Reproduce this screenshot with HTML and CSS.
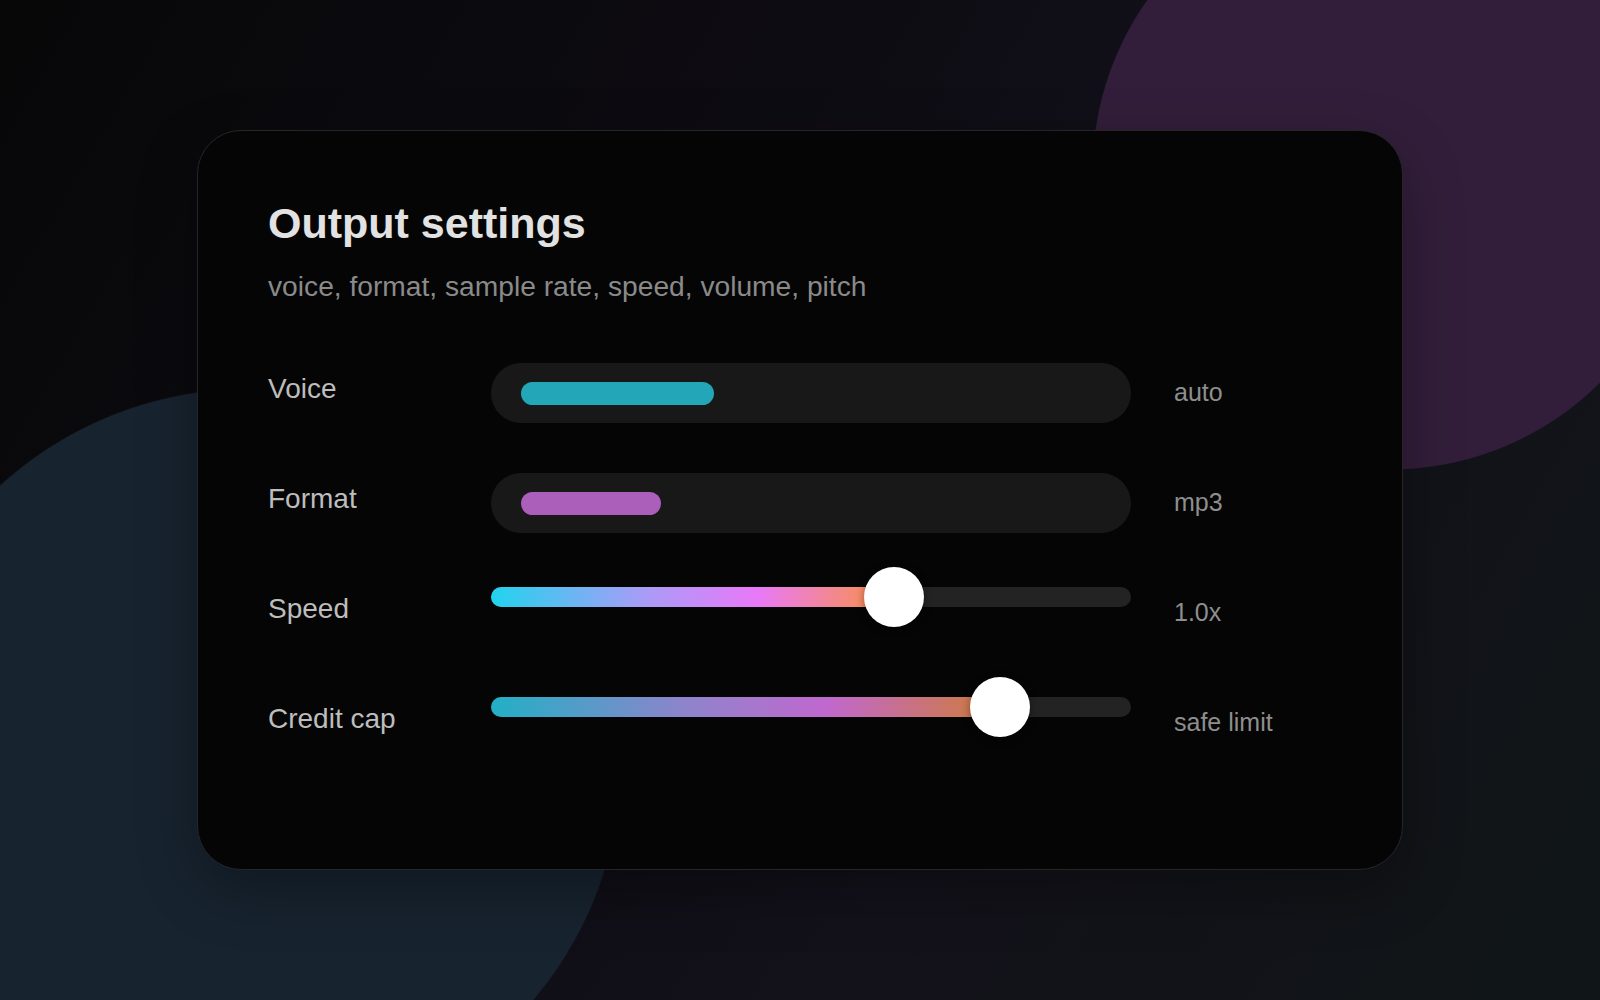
FILE: index.html
```html
<!DOCTYPE html>
<html lang="en">
<head>
    <meta charset="UTF-8">
    <meta name="viewport" content="width=device-width, initial-scale=1.0">
    <title>Output settings</title>
    <link rel="stylesheet" href="styles.css">
</head>
<body>
    <div class="settings-card">
        <h1 class="card-title">Output settings</h1>
        <p class="card-subtitle">voice, format, sample rate, speed, volume, pitch</p>

        <div class="settings-grid">
            <!-- Voice -->
            <div class="setting-label">Voice</div>
            <div class="pill-track">
                <div class="pill-bar pill-voice" style="width: 193px;"></div>
            </div>
            <div class="setting-value">auto</div>

            <!-- Format -->
            <div class="setting-label">Format</div>
            <div class="pill-track">
                <div class="pill-bar pill-format" style="width: 140px;"></div>
            </div>
            <div class="setting-value">mp3</div>

            <!-- Speed -->
            <div class="setting-label">Speed</div>
            <div class="slider">
                <div class="slider-track">
                    <div class="slider-fill fill-speed" style="width: 63%;"></div>
                    <span class="slider-thumb" style="left: 63%;"></span>
                </div>
            </div>
            <div class="setting-value">1.0x</div>

            <!-- Credit cap -->
            <div class="setting-label">Credit cap</div>
            <div class="slider">
                <div class="slider-track">
                    <div class="slider-fill fill-credit" style="width: 79.5%;"></div>
                    <span class="slider-thumb" style="left: 79.5%;"></span>
                </div>
            </div>
            <div class="setting-value">safe limit</div>
        </div>
    </div>
</body>
</html>
```

FILE: styles.css
```css
/* Page + background blobs */
html, body {
    height: 100%;
}

body {
    margin: 0;
    font-family: 'Liberation Sans', Arial, Helvetica, sans-serif;
    display: flex;
    justify-content: center;
    align-items: center;
    background-color: #0e0c12;
    background-image:
        radial-gradient(circle 298px at 1390px 172px, #321e3a 99.6%, rgba(50, 30, 58, 0) 100%),
        radial-gradient(circle 372px at 250px 760px, #17232f 99.6%, rgba(23, 35, 47, 0) 100%),
        linear-gradient(120deg, #070708 0%, #0e0c13 40%, #13111a 65%, #101617 100%);
}

/* Card */
.settings-card {
    box-sizing: border-box;
    width: 1206px;
    padding: 67px 70px 116px;
    background-color: #050505;
    border: 1px solid #262628;
    border-radius: 44px;
    box-shadow: 0 20px 60px rgba(0, 0, 0, 0.3);
}

.card-title {
    margin: 0;
    font-size: 43px;
    line-height: 1.2;
    font-weight: 700;
    color: #e2e2e2;
}

.card-subtitle {
    margin: 21px 0 0;
    font-size: 28.2px;
    line-height: 1.2;
    color: #8a8a8a;
}

/* Rows */
.settings-grid {
    margin-top: 59px;
    display: grid;
    grid-template-columns: 180px 640px 1fr;
    grid-auto-rows: 60px;
    column-gap: 43px;
    row-gap: 50px;
    align-items: start;
}

.setting-label {
    padding-top: 9px;
    font-size: 28px;
    line-height: 1.2;
    color: #bdbdbd;
}

.setting-value {
    padding-top: 14px;
    font-size: 25px;
    line-height: 1.2;
    color: #8e8e8e;
}

/* Pill selectors */
.pill-track {
    box-sizing: border-box;
    height: 60px;
    padding: 0 30px;
    display: flex;
    align-items: center;
    background-color: #181818;
    border-radius: 30px;
}

.pill-bar {
    height: 23px;
    border-radius: 12px;
}

.pill-voice {
    background-color: #22a6b8;
}

.pill-format {
    background-color: #ab5fba;
}

/* Sliders */
.slider {
    padding-top: 4px;
}

.slider-track {
    position: relative;
    height: 20px;
    background-color: #232323;
    border-radius: 10px;
}

.slider-fill {
    height: 100%;
    border-radius: 10px;
}

.fill-speed {
    background: linear-gradient(90deg, #22d3ee 0%, #a99cf6 38%, #e879f9 66%, #fb923c 100%);
}

.fill-credit {
    background: linear-gradient(90deg, #22d3ee 0%, #a99cf6 38%, #e879f9 66%, #fb923c 100%);
    opacity: 0.8;
}

.slider-thumb {
    position: absolute;
    top: 50%;
    width: 60px;
    height: 60px;
    margin: -30px 0 0 -30px;
    background-color: #fff;
    border-radius: 50%;
    box-shadow: 0 2px 8px rgba(0, 0, 0, 0.4);
}
```
